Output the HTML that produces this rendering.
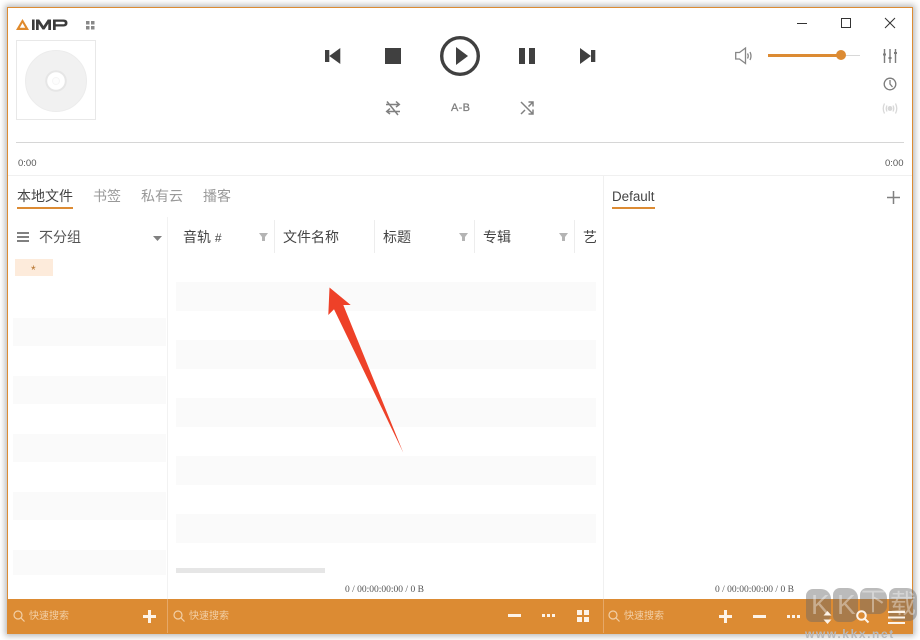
<!DOCTYPE html>
<html><head><meta charset="utf-8"><style>
html,body{margin:0;padding:0;width:920px;height:640px;overflow:hidden;background:#fff;}
body{position:relative;font-family:"Liberation Sans","Noto Sans CJK SC",sans-serif;color:#444;}
.a{position:absolute;}
.t{position:absolute;white-space:nowrap;line-height:16px;}
#win{position:absolute;left:7px;top:7px;width:904px;height:625px;border:1px solid #dc8b33;background:#fff;box-shadow:0 0 6px 2px rgba(0,0,0,.28);}
.s{position:absolute;background:#fafafa;}
.v{position:absolute;background:#ededed;width:1px;}
.b{position:absolute;background:rgba(105,105,105,.45);border-radius:7px 10px 8px 6px;}
svg{position:absolute;overflow:visible;}
</style></head><body>
<div id="win"></div>

<!-- logo -->
<svg style="left:16px;top:18px" width="54" height="13" viewBox="0 0 54 13"><path d="M0 12 L6.500 1 L13 12Z M3.800 9.800 H9.200 L6.500 5Z" fill="#e08a2c" fill-rule="evenodd"/><path d="M16 1.500h2.600V12H16Z M20 12V1.500h3.200L27.500 8 31.800 1.500H35V12H32.300V5.800L28.500 11.500H26.500L22.700 5.800V12Z M37 1.500H47.500Q51.500 1.500 51.500 5T47.500 8.500H39.700V12H37Z M39.700 3.700V6.300H47Q48.800 6.300 48.800 5T47 3.700Z" fill="#3c3c3c" fill-rule="evenodd"/></svg>
<svg style="left:86px;top:21px" width="9" height="9"><path d="M0 0h3.500v3.500H0ZM5 0h3.500v3.500H5ZM0 5h3.500v3.500H0ZM5 5h3.500v3.500H5Z" fill="#888"/></svg>

<!-- album -->
<div class="a" style="left:16px;top:40px;width:78px;height:78px;border:1px solid #e8e8e8"></div>
<svg style="left:25px;top:50px" width="62" height="62"><circle cx="31" cy="31" r="30.500" fill="#f1f1f1" stroke="#ececec"/><circle cx="31" cy="31" r="9.800" fill="#fff" stroke="#e6e6e6" stroke-width="2"/><circle cx="31" cy="31" r="3.500" fill="#fdfdfd" stroke="#f6f6f6"/></svg>

<!-- transport -->
<svg style="left:325px;top:48px" width="16" height="16"><path d="M0 2h4.300v12H0ZM4.300 8L15.300 0V16Z" fill="#404040"/></svg>
<div class="a" style="left:385px;top:48px;width:16px;height:16px;background:#404040"></div>
<svg style="left:440px;top:36px" width="40" height="40"><circle cx="20" cy="20" r="18.300" fill="none" stroke="#404040" stroke-width="3.400"/><path d="M16 11L28 20 16 29Z" fill="#404040"/></svg>
<div class="a" style="left:519px;top:48px;width:6px;height:16px;background:#404040"></div>
<div class="a" style="left:529px;top:48px;width:6px;height:16px;background:#404040"></div>
<svg style="left:580px;top:48px" width="16" height="16"><path d="M11 2h4.300v12H11ZM11 8L0 0V16Z" fill="#404040"/></svg>

<svg style="left:385px;top:100px" width="16" height="16" fill="none" stroke="#808080" stroke-width="1.500"><path d="M1 4.500H14M11 1.500L14.300 4.500 11 7M15 11.500H2M5 8.500L1.700 11.500 5 14M2 1.500L13 15"/></svg>
<div class="t" style="left:451px;top:100px;font-size:11px;color:#808080;letter-spacing:.3px;-webkit-text-stroke:.3px #808080">A-B</div>
<svg style="left:520px;top:101px" width="14" height="14" fill="none" stroke="#808080" stroke-width="1.500"><path d="M1 1L13 13M1 13L5 9M8.500 5.500L13 1M8.500 1H13V5.500M13 8.500V13H8.500"/></svg>

<!-- window controls -->
<div class="a" style="left:797px;top:23px;width:10px;height:1px;background:#333"></div>
<div class="a" style="left:841px;top:18px;width:8px;height:8px;border:1px solid #333"></div>
<svg style="left:885px;top:18px" width="10" height="10"><path d="M0 0L10 10M10 0L0 10" stroke="#333" stroke-width="1" fill="none"/></svg>

<!-- volume -->
<svg style="left:735px;top:47px" width="18" height="18" fill="none" stroke="#868686" stroke-width="1.300"><path d="M.7 5.500H4.500L10.500 1V16.500L4.500 12H.7Z"/><path d="M12.500 6.500Q14 9 12.500 11.500M15 5Q17 9 15 13"/></svg>
<div class="a" style="left:768px;top:54px;width:72px;height:3px;background:#dc8b33"></div>
<div class="a" style="left:840px;top:55px;width:20px;height:1px;background:#d8d8d8"></div>
<div class="a" style="left:836px;top:50px;width:10px;height:10px;border-radius:50%;background:#dc8b33"></div>

<svg style="left:883px;top:49px" width="15" height="14" stroke="#7c7c7c" stroke-width="1.400" fill="none"><path d="M1.500 0V14M7 0V14M12.500 0V14"/><path d="M0 5.500H3M5.500 9H8.500M11 4H14" stroke-width="2"/></svg>
<svg style="left:883px;top:77px" width="14" height="14" fill="none" stroke="#7c7c7c" stroke-width="1.300"><circle cx="7" cy="7" r="5.800"/><path d="M7 3V7L9.500 10"/></svg>
<svg style="left:882px;top:102px" width="16" height="13" fill="none" stroke="#d8d8d8" stroke-width="1.300"><circle cx="8" cy="6.500" r="1.800" fill="#d8d8d8"/><path d="M5 3.500Q3.500 6.500 5 9.500M11 3.500Q12.500 6.500 11 9.500M2.500 1.500Q0 6.500 2.500 11.500M13.500 1.500Q16 6.500 13.500 11.500"/></svg>

<!-- seek -->
<div class="a" style="left:16px;top:142px;width:888px;height:1px;background:#d6d6d6"></div>
<div class="t" style="left:18px;top:156px;font-size:9.500px;color:#555">0:00</div>
<div class="t" style="left:885px;top:156px;font-size:9.500px;color:#555">0:00</div>
<div class="a" style="left:8px;top:175px;width:904px;height:1px;background:#f0f0f0"></div>

<!-- tabs -->
<div class="t" style="left:17px;top:188px;font-size:14px;color:#444">本地文件</div>
<div class="a" style="left:17px;top:207px;width:56px;height:2px;background:#dc8b33"></div>
<div class="t" style="left:93px;top:188px;font-size:14px;color:#999">书签</div>
<div class="t" style="left:141px;top:188px;font-size:14px;color:#999">私有云</div>
<div class="t" style="left:203px;top:188px;font-size:14px;color:#999">播客</div>

<div class="t" style="left:612px;top:189px;font-size:13.400px;color:#444">Default</div>
<div class="a" style="left:612px;top:207px;width:43px;height:2px;background:#dc8b33"></div>
<svg style="left:887px;top:191px" width="13" height="13"><path d="M6.500 0V13M0 6.500H13" stroke="#808080" stroke-width="1.500"/></svg>

<!-- dividers -->
<div class="v" style="left:167px;top:217px;height:382px;background:#f2f2f2"></div>
<div class="v" style="left:603px;top:176px;height:423px;background:#f0f0f0"></div>

<!-- group header -->
<div class="a" style="left:17px;top:232px;width:12px;height:2px;background:#808080"></div>
<div class="a" style="left:17px;top:236px;width:12px;height:2px;background:#808080"></div>
<div class="a" style="left:17px;top:240px;width:12px;height:2px;background:#808080"></div>
<div class="t" style="left:39px;top:229px;font-size:14px;color:#555">不分组</div>
<svg style="left:153px;top:236px" width="9" height="5"><path d="M0 0H9L4.500 5Z" fill="#808080"/></svg>
<div class="a" style="left:15px;top:259px;width:38px;height:17px;background:#fdebdb"></div>
<div class="t" style="left:31px;top:262px;font-size:12px;color:#b5722c">*</div>

<!-- column header -->
<div class="t" style="left:183px;top:229px;font-size:14px;color:#444">音轨 <span style="font-size:12px">#</span></div>
<div class="t" style="left:283px;top:229px;font-size:14px;color:#444">文件名称</div>
<div class="t" style="left:383px;top:229px;font-size:14px;color:#444">标题</div>
<div class="t" style="left:483px;top:229px;font-size:14px;color:#444">专辑</div>
<div class="t" style="left:583px;top:229px;font-size:14px;color:#444">艺</div>
<div class="v" style="left:274px;top:220px;height:33px"></div>
<div class="v" style="left:374px;top:220px;height:33px"></div>
<div class="v" style="left:474px;top:220px;height:33px"></div>
<div class="v" style="left:574px;top:220px;height:33px"></div>
<svg style="left:259px;top:233px" width="9" height="8"><path d="M0 0H9L6 4V8H3V4Z" fill="#b4b4b4"/></svg>
<svg style="left:459px;top:233px" width="9" height="8"><path d="M0 0H9L6 4V8H3V4Z" fill="#b4b4b4"/></svg>
<svg style="left:559px;top:233px" width="9" height="8"><path d="M0 0H9L6 4V8H3V4Z" fill="#b4b4b4"/></svg>

<!-- stripes -->
<div class="s" style="left:13px;top:318px;width:153px;height:28px"></div>
<div class="s" style="left:13px;top:376px;width:153px;height:28px"></div>
<div class="s" style="left:13px;top:434px;width:153px;height:28px"></div>
<div class="s" style="left:13px;top:492px;width:153px;height:28px"></div>
<div class="s" style="left:13px;top:550px;width:153px;height:25px"></div>
<div class="s" style="left:176px;top:282px;width:420px;height:29px"></div>
<div class="s" style="left:176px;top:340px;width:420px;height:29px"></div>
<div class="s" style="left:176px;top:398px;width:420px;height:29px"></div>
<div class="s" style="left:176px;top:456px;width:420px;height:29px"></div>
<div class="s" style="left:176px;top:514px;width:420px;height:29px"></div>
<div class="a" style="left:176px;top:568px;width:149px;height:5px;background:#e6e6e6"></div>

<!-- arrow -->
<svg style="left:320px;top:285px" width="90" height="175"><path d="M9.500 2.500L30.700 20 23.300 20 83.300 167.700 14 24.300 8.300 30Z" fill="#ee4128"/></svg>

<!-- status -->
<div class="t" style="left:345px;top:582px;font-size:9.500px;color:#555;font-family:'Liberation Serif','Liberation Sans',serif">0 / 00:00:00:00 / 0 B</div>
<div class="t" style="left:715px;top:582px;font-size:9.500px;color:#555;font-family:'Liberation Serif','Liberation Sans',serif">0 / 00:00:00:00 / 0 B</div>

<!-- footer -->
<div class="a" style="left:7px;top:599px;width:906px;height:34px;background:#dc8b33"></div>
<div class="a" style="left:167px;top:599px;width:1px;height:34px;background:#e6a868"></div>
<div class="a" style="left:603px;top:599px;width:1px;height:34px;background:#e6a868"></div>

<!-- watermark -->
<div class="b" style="left:806px;top:589px;width:25px;height:33px"></div>
<div class="b" style="left:833px;top:588px;width:25px;height:34px"></div>
<div class="b" style="left:860px;top:588px;width:27px;height:26px"></div>
<div class="b" style="left:889px;top:588px;width:28px;height:33px"></div>
<div class="t" style="left:811px;top:589px;font-size:28px;line-height:32px;color:rgba(255,255,255,.38)">K</div>
<div class="t" style="left:837px;top:589px;font-size:28px;line-height:32px;color:rgba(255,255,255,.38)">K</div>
<div class="t" style="left:861px;top:587px;font-size:25px;line-height:30px;color:rgba(255,255,255,.38)">下</div>
<div class="t" style="left:890px;top:589px;font-size:26px;line-height:30px;color:rgba(255,255,255,.38)">载</div>
<div class="t" style="left:805px;top:627px;font-size:12px;line-height:14px;font-weight:bold;color:#b7b9bc;letter-spacing:1.600px">www.kkx.net</div>

<svg style="left:13px;top:610px" width="12" height="12" fill="none" stroke="#f2cfa6" stroke-width="1.200"><circle cx="5" cy="5" r="4"/><path d="M8 8L11.500 11.500"/></svg>
<div class="t" style="left:29px;top:609px;font-size:10px;color:#f2cfa6">快速搜索</div>
<svg style="left:173px;top:610px" width="12" height="12" fill="none" stroke="#f2cfa6" stroke-width="1.200"><circle cx="5" cy="5" r="4"/><path d="M8 8L11.500 11.500"/></svg>
<div class="t" style="left:189px;top:609px;font-size:10px;color:#f2cfa6">快速搜索</div>
<svg style="left:608px;top:610px" width="12" height="12" fill="none" stroke="#f2cfa6" stroke-width="1.200"><circle cx="5" cy="5" r="4"/><path d="M8 8L11.500 11.500"/></svg>
<div class="t" style="left:624px;top:609px;font-size:10px;color:#f2cfa6">快速搜索</div>

<svg style="left:143px;top:610px" width="13" height="13"><path d="M6.500 0V13M0 6.500H13" stroke="#fdf3e8" stroke-width="3"/></svg>
<div class="a" style="left:508px;top:614px;width:13px;height:3px;background:#fdf3e8"></div>
<svg style="left:542px;top:614px" width="13" height="3"><path d="M0 0h3v3H0ZM5 0h3v3H5ZM10 0h3v3h-3Z" fill="#fdf3e8"/></svg>
<svg style="left:577px;top:610px" width="12" height="12"><path d="M0 0h5v5H0ZM7 0h5v5H7ZM0 7h5v5H0ZM7 7h5v5H7Z" fill="#fdf3e8"/></svg>
<svg style="left:719px;top:610px" width="13" height="13"><path d="M6.500 0V13M0 6.500H13" stroke="#fdf3e8" stroke-width="3"/></svg>
<div class="a" style="left:753px;top:615px;width:13px;height:3px;background:#fdf3e8"></div>
<svg style="left:787px;top:615px" width="13" height="3"><path d="M0 0h3v3H0ZM5 0h3v3H5ZM10 0h3v3h-3Z" fill="#fdf3e8"/></svg>
<svg style="left:823px;top:611px" width="9" height="13"><path d="M4.500 0L8.500 4.500H.5ZM.5 8.500H8.500L4.500 13Z" fill="#fdf3e8"/></svg>
<svg style="left:856px;top:610px" width="13" height="13" fill="none" stroke="#fdf3e8" stroke-width="2"><circle cx="5.500" cy="5.500" r="4.300"/><path d="M8.500 8.500L12.500 12.500"/></svg>
<svg style="left:888px;top:611px" width="17" height="13"><path d="M0 0h17v2H0ZM0 5.500h17v2H0ZM0 11h17v2H0Z" fill="#fdf3e8"/></svg>
</body></html>
